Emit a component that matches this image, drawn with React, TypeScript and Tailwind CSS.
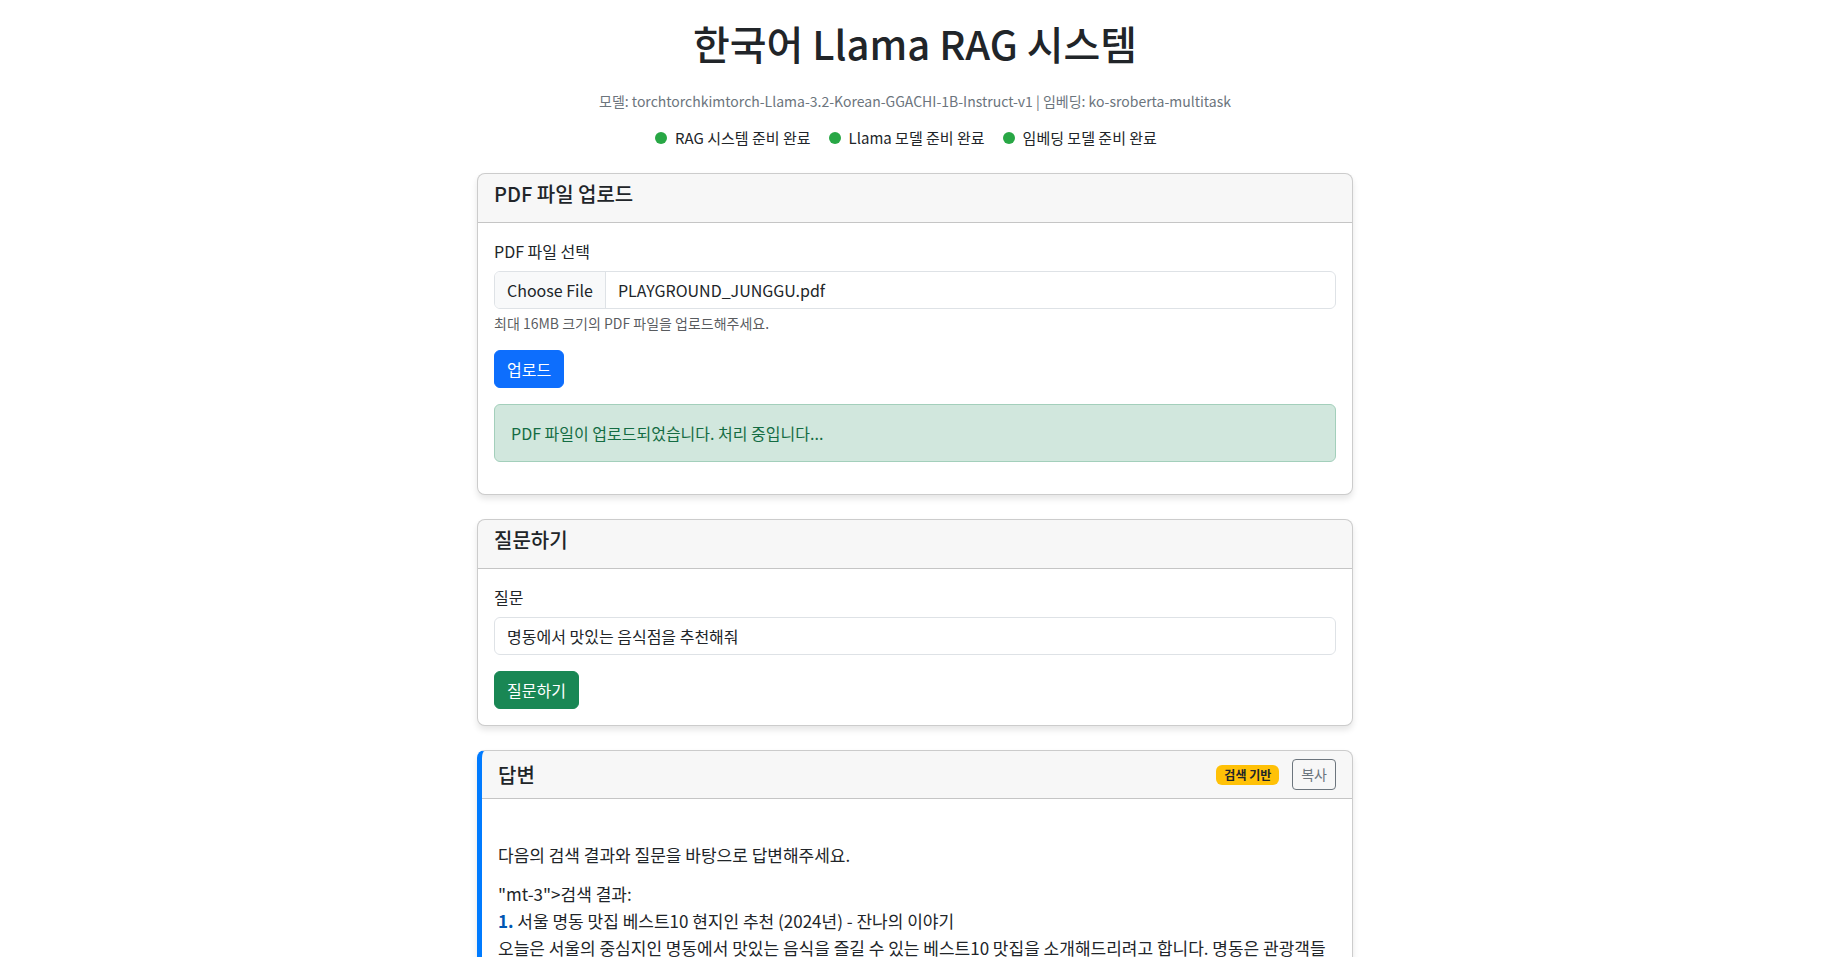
import { useEffect, useRef, useState } from "react";
import type { ReactNode } from "react";

const statuses = ["RAG 시스템 준비 완료", "Llama 모델 준비 완료", "임베딩 모델 준비 완료"];

function Card({ title, children }: { title: string; children: ReactNode }) {
  return (
    <section className="mb-6 overflow-hidden rounded-lg border border-black/20 bg-white shadow-[0_4px_6px_rgba(0,0,0,0.1)]">
      <header className="border-b border-black/20 bg-black/3 px-4 pt-2 pb-4">
        <h2 className="text-xl leading-6 font-medium">{title}</h2>
      </header>
      <div className="p-4">{children}</div>
    </section>
  );
}

export default function App() {
  const fileRef = useRef<HTMLInputElement>(null);
  const [question, setQuestion] = useState("명동에서 맛있는 음식점을 추천해줘");

  useEffect(() => {
    if (!fileRef.current) return;
    const transfer = new DataTransfer();
    transfer.items.add(new File(["%PDF"], "PLAYGROUND_JUNGGU.pdf", { type: "application/pdf" }));
    fileRef.current.files = transfer.files;
  }, []);

  return (
    <div className="h-screen overflow-y-auto bg-white pr-[10px] font-['Noto_Sans_CJK_KR',sans-serif] text-base leading-6 text-[#212529] [scrollbar-width:none]">
      <main className="mx-auto max-w-[900px] px-3 pt-[19px] pb-5">
        <div className="mb-[25px] text-center">
          <h1 className="mb-6 text-[40px] leading-12 font-medium">한국어 Llama RAG 시스템</h1>
          <p className="mb-4 text-sm leading-[21px] text-[#6c757d]">
            모델: torchtorchkimtorch-Llama-3.2-Korean-GGACHI-1B-Instruct-v1 | 임베딩: ko-sroberta-multitask
          </p>
          <ul className="flex justify-center text-[15px] leading-5">
            {statuses.map((status) => (
              <li key={status} className="mr-[18px] flex items-center gap-2">
                <span className="size-3 rounded-full bg-[#28a745]" />
                {status}
              </li>
            ))}
          </ul>
        </div>

        <Card title="PDF 파일 업로드">
          <form onSubmit={(e) => e.preventDefault()}>
            <label htmlFor="pdf" className="mb-2 block">PDF 파일 선택</label>
            <input
              ref={fileRef}
              id="pdf"
              type="file"
              accept=".pdf"
              className="block h-[38px] w-full overflow-hidden rounded-md border border-[#dee2e6] bg-white leading-6 file:mr-3 file:h-9 file:border-r file:border-[#dee2e6] file:bg-[#f8f9fa] file:px-3 file:text-[#212529]"
            />
            <p className="mt-1 mb-4 text-sm leading-[21px] text-[#212529]/75">최대 16MB 크기의 PDF 파일을 업로드해주세요.</p>
            <button type="submit" className="rounded-md border border-[#0d6efd] bg-[#0d6efd] px-3 py-1.5 text-white">
              업로드
            </button>
          </form>
          <div role="alert" className="my-4 rounded-md border border-[#a3cfbb] bg-[#d1e7dd] p-4 text-[#146c43]">
            PDF 파일이 업로드되었습니다. 처리 중입니다...
          </div>
        </Card>

        <Card title="질문하기">
          <form onSubmit={(e) => e.preventDefault()}>
            <label htmlFor="question" className="mb-2 block">질문</label>
            <input
              id="question"
              type="text"
              value={question}
              onChange={(e) => setQuestion(e.target.value)}
              className="mb-4 block h-[38px] w-full rounded-md border border-[#dee2e6] bg-white px-3"
            />
            <button type="submit" className="rounded-md border border-[#198754] bg-[#198754] px-3 py-1.5 text-white">
              질문하기
            </button>
          </form>
        </Card>

        <section className="overflow-hidden rounded-lg border border-l-[5px] border-black/20 border-l-[#007bff] bg-white shadow-[0_4px_6px_rgba(0,0,0,0.1)]">
          <header className="flex items-center justify-between border-b border-black/20 bg-black/3 px-4 py-2">
            <h2 className="text-xl leading-6 font-medium">답변</h2>
            <div className="flex items-center gap-[13px]">
              <span className="rounded-md bg-[#ffc107] px-2 py-1 text-xs leading-3 font-bold">검색 기반</span>
              <button type="button" className="rounded border border-[#6c757d] px-2 py-1 text-sm leading-[21px] text-[#6c757d]">
                복사
              </button>
            </div>
          </header>
          <div className="px-4 pt-[42px] pb-4 text-[17px] leading-[27px]">
            <p className="mb-3">다음의 검색 결과와 질문을 바탕으로 답변해주세요.</p>
            <p>"mt-3"&gt;검색 결과:</p>
            <p>
              <strong className="font-bold text-[#0056b3]">1.</strong> 서울 명동 맛집 베스트10 현지인 추천 (2024년) - 잔나의 이야기
            </p>
            <p>오늘은 서울의 중심지인 명동에서 맛있는 음식을 즐길 수 있는 베스트10 맛집을 소개해드리려고 합니다. 명동은 관광객들</p>
          </div>
        </section>
      </main>
    </div>
  );
}
